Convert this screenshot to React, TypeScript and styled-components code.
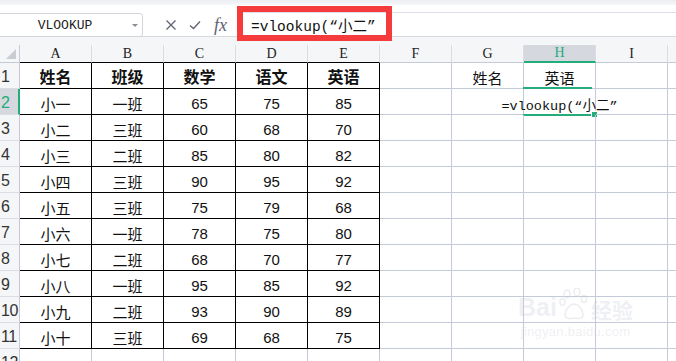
import React from "react";
import styled, { createGlobalStyle, css } from "styled-components";

const GREEN = "#22ad7a";
const GRID = "#c5cad8";
const HEAD_BG = "#f5f6f8";
const HEAD_SEL = "#d5d8df";
const CJK = `"Noto Sans CJK SC", sans-serif`;
const MONO = `"Liberation Mono", "Noto Sans CJK SC", monospace`;

const GlobalStyle = createGlobalStyle`
  html, body {
    margin: 0;
    padding: 0;
    background: #fff;
    overflow: hidden;
  }
`;

const Screen = styled.div`
  position: relative;
  width: 676px;
  height: 361px;
  overflow: hidden;
  background: #fff;
  font-family: ${CJK};
  color: #111;
`;

const TopStrip = styled.div`
  height: 5px;
  background: linear-gradient(#eceef2, #f6f7f9);
`;

const FormulaRow = styled.div`
  position: relative;
  display: flex;
  align-items: flex-end;
  height: 31px;
  border-bottom: 1px solid #d7dae1;
  background: #fff;
`;

const NameBox = styled.div`
  position: relative;
  display: flex;
  align-items: center;
  justify-content: center;
  box-sizing: border-box;
  width: 152px;
  height: 24px;
  margin-left: -9px;
  margin-bottom: -1px;
  padding-right: 4px;
  border: 1px solid #d3d6dd;
  border-radius: 3px;
  font-family: ${MONO};
  font-size: 13px;
  color: #222;
`;

const Caret = styled.span`
  position: absolute;
  right: 4px;
  top: 10px;
  width: 0;
  height: 0;
  border-left: 3px solid transparent;
  border-right: 3px solid transparent;
  border-top: 3px solid #8a8d96;
`;

const Tools = styled.div`
  display: flex;
  align-items: center;
  gap: 12px;
  height: 23px;
  padding-left: 22px;
  width: 94px;
  box-sizing: border-box;
  color: #5e6272;
`;

const Fx = styled.span`
  font-family: "Liberation Serif", serif;
  font-style: italic;
  font-size: 18px;
  line-height: 1;
  margin-left: 1px;
`;

const FormulaField = styled.div`
  flex: 1;
  display: flex;
  align-items: center;
  height: 23px;
  border-top: 1px solid #dde0e6;
  padding-left: 14px;
  font-family: ${MONO};
  font-size: 14.5px;
  color: #111;
  white-space: nowrap;
`;

const Highlight = styled.div`
  position: absolute;
  left: 237px;
  top: 1px;
  width: 155px;
  height: 35px;
  box-sizing: border-box;
  border: 6px solid #f53b3b;
  pointer-events: none;
`;

const Band = styled.div`
  height: 8px;
  background: ${HEAD_BG};
`;

const Sheet = styled.div`
  display: grid;
  grid-template-columns: 20px repeat(10, 72px);
  grid-template-rows: 18px;
  grid-auto-rows: 26px;
`;

const Corner = styled.div`
  position: relative;
  box-sizing: border-box;
  background: ${HEAD_BG};
  border-right: 1px solid ${GRID};
  border-bottom: 1px solid ${GRID};
  &::after {
    content: "";
    position: absolute;
    right: 3px;
    bottom: 3px;
    border-left: 10px solid transparent;
    border-bottom: 10px solid #c9ccd2;
  }
`;

const ColHead = styled.div<{ $selected?: boolean; $dark?: boolean }>`
  display: flex;
  align-items: center;
  justify-content: center;
  box-sizing: border-box;
  background: ${HEAD_BG};
  border-right: 1px solid #dadde4;
  border-bottom: 1px solid ${(p) => (p.$dark ? "#000" : GRID)};
  font-family: "Liberation Serif", serif;
  font-size: 14px;
  color: #222;
  ${(p) =>
    p.$selected &&
    css`
      background: ${HEAD_SEL};
      color: ${GREEN};
      border-bottom: 2px solid ${GREEN};
    `}
`;

const RowHead = styled.div<{ $selected?: boolean }>`
  display: flex;
  align-items: center;
  box-sizing: border-box;
  padding-left: 1px;
  padding-top: 2px;
  background: ${HEAD_BG};
  border-right: 1px solid ${GRID};
  border-bottom: 1px solid #dadde4;
  font-family: "Liberation Sans", sans-serif;
  font-size: 16px;
  color: #333;
  letter-spacing: -0.5px;
  overflow: hidden;
  ${(p) =>
    p.$selected &&
    css`
      background: ${HEAD_SEL};
      color: ${GREEN};
      border-right: 2px solid ${GREEN};
    `}
`;

const Cell = styled.div<{ $boxed?: boolean; $bold?: boolean; $num?: boolean }>`
  position: relative;
  display: flex;
  align-items: center;
  justify-content: center;
  box-sizing: border-box;
  padding-top: ${(p) => (p.$bold ? 0 : 3)}px;
  border-right: 1px solid ${(p) => (p.$boxed ? "#000" : GRID)};
  border-bottom: 1px solid ${(p) => (p.$boxed ? "#000" : GRID)};
  font-family: ${(p) => (p.$num ? `"Liberation Sans", sans-serif` : CJK)};
  font-size: ${(p) => (p.$bold ? 16 : 15)}px;
  font-weight: ${(p) => (p.$bold ? 700 : 400)};
  color: #111;
  white-space: nowrap;
`;

const ActiveFrame = styled.div`
  position: absolute;
  left: -1px;
  right: 3px;
  top: -2px;
  bottom: -2px;
  border-top: 2px solid ${GREEN};
  border-bottom: 2px solid ${GREEN};
  pointer-events: none;
`;

const FillHandle = styled.div`
  position: absolute;
  right: -3px;
  bottom: -4px;
  width: 5px;
  height: 5px;
  background: ${GREEN};
  border: 1px solid #fff;
`;

const EditText = styled.span`
  position: absolute;
  left: 50%;
  top: 5px;
  transform: translateX(-50%);
  font-family: ${MONO};
  font-size: 13.5px;
  color: #111;
  z-index: 2;
`;

const Watermark = styled.div`
  position: absolute;
  left: 518px;
  top: 288px;
  display: flex;
  flex-direction: column;
  align-items: center;
  color: rgba(200, 204, 214, 0.3);
  font-family: "Liberation Sans", sans-serif;
  pointer-events: none;
`;

const MarkLine = styled.div`
  display: flex;
  align-items: flex-end;
  font-size: 25px;
  font-weight: 700;
  line-height: 1;
  gap: 2px;
`;

const MarkSub = styled.div`
  font-size: 13px;
  margin-top: 4px;
  letter-spacing: 0.3px;
`;

const MarkCn = styled.span`
  font-family: ${CJK};
  font-size: 21px;
`;

const Paw = () => (
  <svg width="30" height="32" viewBox="0 0 30 32" fill="none" stroke="rgba(200,204,214,0.35)" strokeWidth="1.5">
    <ellipse cx="8" cy="6" rx="3" ry="4" />
    <ellipse cx="18" cy="4" rx="3" ry="4" />
    <ellipse cx="3.5" cy="14" rx="2.5" ry="3.5" />
    <ellipse cx="25" cy="11" rx="2.5" ry="3.5" />
    <path d="M6 27c0-6 5-11 9-11s9 5 9 11c0 4-5 4-9 3-4 1-9 1-9-3z" />
  </svg>
);

const CrossIcon = () => (
  <svg width="12" height="12" viewBox="0 0 12 12" stroke="currentColor" strokeWidth="1.3">
    <path d="M1.5 1.5l9 9M10.5 1.5l-9 9" />
  </svg>
);

const CheckIcon = () => (
  <svg width="12" height="10" viewBox="0 0 12 10" fill="none" stroke="currentColor" strokeWidth="1.3">
    <path d="M1 5.5l3.5 3L11 1.5" />
  </svg>
);

// J is only a sliver at the right edge, so its letter stays out of view
const COLS = ["A", "B", "C", "D", "E", "F", "G", "H", "I", ""];
const HEADERS = ["姓名", "班级", "数学", "语文", "英语"];
const DATA: (string | number)[][] = [
  ["小一", "一班", 65, 75, 85],
  ["小二", "三班", 60, 68, 70],
  ["小三", "二班", 85, 80, 82],
  ["小四", "三班", 90, 95, 92],
  ["小五", "三班", 75, 79, 68],
  ["小六", "一班", 78, 75, 80],
  ["小七", "二班", 68, 70, 77],
  ["小八", "一班", 95, 85, 92],
  ["小九", "二班", 93, 90, 89],
  ["小十", "三班", 69, 68, 75],
];
const FORMULA = "=vlookup(“小二”";

function renderRow(r: number) {
  const cells: React.ReactNode[] = [];
  for (let c = 0; c < COLS.length; c++) {
    const key = `${r}-${c}`;
    const inTable = c < 5 && r <= 11;
    if (r === 1 && c < 5) {
      cells.push(
        <Cell key={key} $boxed $bold>
          {HEADERS[c]}
        </Cell>
      );
    } else if (inTable) {
      const v = DATA[r - 2][c];
      cells.push(
        <Cell key={key} $boxed $num={typeof v === "number"}>
          {v}
        </Cell>
      );
    } else if (r === 1 && c === 6) {
      cells.push(<Cell key={key}>姓名</Cell>);
    } else if (r === 1 && c === 7) {
      cells.push(<Cell key={key}>英语</Cell>);
    } else if (r === 2 && c === 7) {
      cells.push(
        <Cell key={key}>
          <EditText>{FORMULA}</EditText>
          <ActiveFrame />
          <FillHandle />
        </Cell>
      );
    } else {
      cells.push(<Cell key={key} />);
    }
  }
  return cells;
}

export default function App() {
  const rows = Array.from({ length: 12 }, (_, i) => i + 1);
  return (
    <>
      <GlobalStyle />
      <Screen>
        <TopStrip />
        <FormulaRow>
          <NameBox>
            VLOOKUP
            <Caret />
          </NameBox>
          <Tools>
            <CrossIcon />
            <CheckIcon />
            <Fx>fx</Fx>
          </Tools>
          <FormulaField>{FORMULA}</FormulaField>
          <Highlight />
        </FormulaRow>
        <Band />
        <Sheet>
          <Corner />
          {COLS.map((c, i) => (
            <ColHead key={i} $selected={c === "H"} $dark={i < 5}>
              {c}
            </ColHead>
          ))}
          {rows.map((r) => (
            <React.Fragment key={r}>
              <RowHead $selected={r === 2}>{r}</RowHead>
              {renderRow(r)}
            </React.Fragment>
          ))}
        </Sheet>
        <Watermark>
          <MarkLine>
            <span>Bai</span>
            <Paw />
            <MarkCn>经验</MarkCn>
          </MarkLine>
          <MarkSub>jingyan.baidu.com</MarkSub>
        </Watermark>
      </Screen>
    </>
  );
}
